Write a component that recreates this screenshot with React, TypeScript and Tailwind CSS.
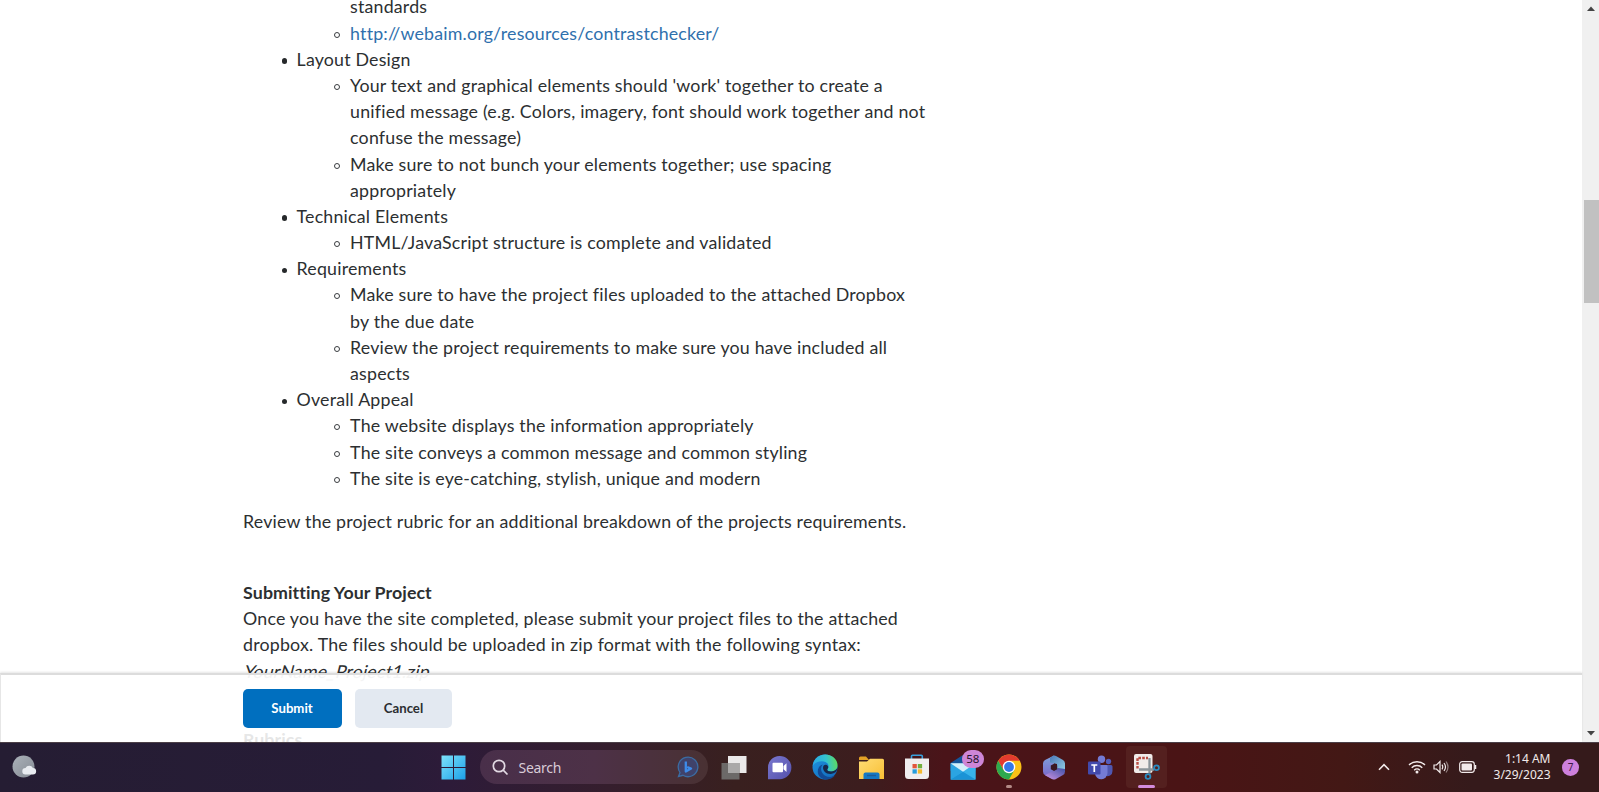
import React from "react";

const sub = "pl-[53.500px]";
const disc =
  "before:mr-[9.500px] before:-ml-[15px] before:inline-block before:h-[5.500px] before:w-[5.500px] before:rounded-full before:bg-[#26292b] before:align-[2px] before:content-['']";
const ring =
  "before:mr-[10px] before:-ml-[16px] before:inline-block before:h-[6px] before:w-[6px] before:rounded-full before:border before:border-[#3a3d40] before:align-[2px] before:content-['']";

function Content() {
  return (
    <main className="h-[742px] w-full overflow-hidden pl-[243.100px] text-[17.8px] leading-[26.180px] tracking-[0.190px] text-[#2c2f31]">
      <div className="-mt-[6.600px] w-[700px] whitespace-nowrap">
        <ul className={sub}>
          <li>
            <ul className={sub}>
              <li>standards</li>
              <li className={ring}>
                <a className="text-[#2f70ad]">http://webaim.org/resources/contrastchecker/</a>
              </li>
            </ul>
          </li>
          <li className={disc}>
            Layout Design
            <ul className={sub}>
              <li className={ring}>
                Your text and graphical elements should 'work' together to create a<br />
                unified message (e.g. Colors, imagery, font should work together and not<br />
                confuse the message)
              </li>
              <li className={ring}>
                Make sure to not bunch your elements together; use spacing<br />
                appropriately
              </li>
            </ul>
          </li>
          <li className={disc}>
            Technical Elements
            <ul className={sub}>
              <li className={ring}>HTML/JavaScript structure is complete and validated</li>
            </ul>
          </li>
          <li className={disc}>
            Requirements
            <ul className={sub}>
              <li className={ring}>
                Make sure to have the project files uploaded to the attached Dropbox<br />
                by the due date
              </li>
              <li className={ring}>
                Review the project requirements to make sure you have included all<br />
                aspects
              </li>
            </ul>
          </li>
          <li className={disc}>
            Overall Appeal
            <ul className={sub}>
              <li className={ring}>The website displays the information appropriately</li>
              <li className={ring}>The site conveys a common message and common styling</li>
              <li className={ring}>The site is eye-catching, stylish, unique and modern</li>
            </ul>
          </li>
        </ul>
        <p className="mt-[17px]">Review the project rubric for an additional breakdown of the projects requirements.</p>
        <p className="mt-[44.8px]">
          <b className="font-bold tracking-[0.080px]">Submitting Your Project</b>
          <br />
          Once you have the site completed, please submit your project files to the attached
          <br />
          dropbox. The files should be uploaded in zip format with the following syntax:
          <br />
          <span className="inline-block origin-[0_75%] -skew-x-14">YourName_Project1.zip</span>
        </p>
        <h2 className="mt-[42.500px] font-bold tracking-[0.080px]">Rubrics</h2>
      </div>
    </main>
  );
}

function Scrollbar() {
  return (
    <div className="flex h-[742px] w-[17px] shrink-0 flex-col items-center bg-[#f0f0f0]">
      <svg className="mt-[6px] h-[5px] w-[8px]" viewBox="0 0 8 5"><path d="M0 5 4 0.5 8 5z" fill="#444" /></svg>
      <div className="mt-[189px] ml-[1px] h-[103px] w-[15px] bg-[#c1c1c1]" />
      <svg className="mt-auto mb-[6px] h-[5px] w-[8px]" viewBox="0 0 8 5"><path d="M0 0 4 4.5 8 0z" fill="#444" /></svg>
    </div>
  );
}

function Weather() {
  return (
    <svg className="h-[24px] w-[26px]" viewBox="0 0 26 24">
      <defs><linearGradient id="moon" x1="0" y1="0" x2="1" y2="1"><stop stopColor="#abb2ba" /><stop offset="1" stopColor="#858b94" /></linearGradient></defs>
      <circle cx="11.5" cy="11.5" r="11" fill="url(#moon)" />
      <path d="M13.500 19.500a3.200 3.200 0 0 1 0-6.400a4.200 4.200 0 0 1 7.400-.2a3.300 3.300 0 0 1-.1 6.600z" fill="#e8ebf0" />
    </svg>
  );
}

function Windows() {
  return (
    <svg className="h-[25px] w-[25px]" viewBox="0 0 25 25">
      <defs><linearGradient id="win" gradientUnits="userSpaceOnUse" x1="0" y1="0" x2="25" y2="25"><stop stopColor="#7fe3fb" /><stop offset="1" stopColor="#1a9fe8" /></linearGradient></defs>
      <path d="M.500.500H12V12H.500zM13 .500h11.500V12H13zM.500 13H12v11.500H.500zM13 13h11.500v11.500H13z" fill="url(#win)" />
    </svg>
  );
}

function Bing() {
  return (
    <svg className="h-[24px] w-[24px]" viewBox="0 0 24 24">
      <path d="M2.500 21.500 4 17.500A9.800 9.800 0 1 1 7 20.300Z" fill="#40426a" stroke="#3b6ca3" strokeWidth="1.300" />
      <path d="M9.800 6.500v10l5.200-2.900-3.800-1.600" fill="none" stroke="#3d8bea" strokeWidth="2.300" strokeLinejoin="round" />
    </svg>
  );
}

function TaskView() {
  return (
    <svg className="h-[25px] w-[26px]" viewBox="0 0 26 25">
      <path d="M7 1h18.500v17H7z" fill="#ebe9e9" />
      <path d="M.500 8h18v16.500H.500z" fill="#6c6968" />
      <path d="M7 8h11.500v10H7z" fill="#aaa8a8" />
    </svg>
  );
}

function Chat() {
  return (
    <svg className="h-[25px] w-[25px]" viewBox="0 0 25 25">
      <defs><linearGradient id="chat" x1="0" y1="0" x2="1" y2="1"><stop stopColor="#7a78d0" /><stop offset="1" stopColor="#5450aa" /></linearGradient></defs>
      <path d="M1 24.300V13A11.700 11.700 0 1 1 12.700 24.300z" fill="url(#chat)" />
      <rect x="5.500" y="7.800" width="10.500" height="9.500" rx="1" fill="#fff" />
      <path d="M16.500 11 19.500 8.300V17l-3-2.700z" fill="#fff" />
    </svg>
  );
}

function Edge() {
  return (
    <svg className="h-[26px] w-[26px]" viewBox="0 0 26 26">
      <defs>
        <linearGradient id="e1" x1="0" y1="0.400" x2="1" y2="0.300"><stop stopColor="#2aa9e5" /><stop offset=".55" stopColor="#34c3cf" /><stop offset="1" stopColor="#5fdc5c" /></linearGradient>
        <linearGradient id="e2" x1="0" y1="0" x2="1" y2="1"><stop stopColor="#1e94e0" /><stop offset="1" stopColor="#1267b8" /></linearGradient>
      </defs>
      <circle cx="13" cy="13" r="12.500" fill="url(#e2)" />
      <path d="M.600 12C1.600 4.800 7 .500 13.200.500c7 0 12.300 5 12.300 10.700 0 3.900-2.800 6.300-6.300 6.300-3 0-4-.9-4-1.700s1.300-1.300 1.300-3.600c0-2.900-2.800-5-6.600-5-4.600 0-7.600 2-9.300 4.800z" fill="url(#e1)" />
      <path d="M9.500 12.500c-1.700 5 2.200 10.300 8.300 10.400 2.400 0 4.500-.8 5.700-1.900-2.300 3-6 4.500-10 4.500C7.800 25 4.900 20 6 15.500c.7-2.700 2.200-4.300 4.700-5z" fill="#124b96" />
      <path d="M11.200 12.500c.4-1.500 2-2.300 3.500-1.500 1.700.9 1.900 2.500 1.100 3.600-1 1.300-.6 2.900 3.200 2.900 2.200 0 4.200-.8 6.500-3.500-.5 3.700-2.800 5.500-6.500 6-5 .3-8.800-3.500-7.800-7.500z" fill="#17284a" />
    </svg>
  );
}

function Folder() {
  return (
    <svg className="h-[25px] w-[27px]" viewBox="0 0 27 25">
      <defs><linearGradient id="fold" x1="0" y1="0" x2="1" y2="1"><stop stopColor="#ffdc74" /><stop offset="1" stopColor="#f8bf35" /></linearGradient></defs>
      <path d="M1 3a1.500 1.500 0 0 1 1.500-1.500H8L11 5H1z" fill="#e2a126" />
      <path d="M1 6.500h8L12 3.800h12.500A1.500 1.500 0 0 1 26 5.300V24H1z" fill="url(#fold)" />
      <path d="M5.500 24v-4.500A2 2 0 0 1 7.500 17.500h12a2 2 0 0 1 2 2V24z" fill="#1478c4" />
      <path d="M9 20.500h9" stroke="#1c5c98" strokeWidth="1.500" />
    </svg>
  );
}

function Store() {
  return (
    <svg className="h-[26px] w-[26px]" viewBox="0 0 26 26">
      <path d="M7.500 6V2.300a1 1 0 0 1 1-1h8.800a1 1 0 0 1 1 1V6" fill="none" stroke="#39a0dc" strokeWidth="1.600" />
      <path d="M1 4.500h24v17a3.500 3.500 0 0 1-3.500 3.500h-17A3.500 3.500 0 0 1 1 21.500z" fill="#f0eeef" />
      <path d="M8.500 10h4.300v4.300H8.500z" fill="#e2553c" /><path d="M13.800 10h4.300v4.300h-4.300z" fill="#72ae3d" />
      <path d="M8.500 15.300h4.300v4.300H8.500z" fill="#269ddd" /><path d="M13.800 15.300h4.300v4.300h-4.300z" fill="#f4b92e" />
    </svg>
  );
}

function Mail() {
  return (
    <div className="relative h-[25px] w-[26px]">
      <svg className="h-[25px] w-[26px]" viewBox="0 0 26 25">
        <path d="M.500 8 13 0l12.500 8v8H.500z" fill="#14559a" />
        <path d="M.500 8.500 H25.500V24.500H.500z" fill="#2ba4e2" />
        <path d="M25.500 8.500v16L.500 24.500z" fill="#38b3ea" />
        <path d="M.500 8.300h25L13 16.800z" fill="#d3effa" />
        <path d="M.500 24.500 13 16.800 25.500 24.500z" fill="#1b93d6" />
      </svg>
      <span className="absolute -top-[5px] left-[12px] flex h-[18px] w-[22px] items-center justify-center rounded-full bg-[#ce86d6] text-[11.500px] text-[#27152d]">58</span>
    </div>
  );
}

function Chrome() {
  return (
    <svg className="h-[26px] w-[26px]" viewBox="0 0 26 26">
      <circle cx="13" cy="13" r="12.500" fill="#fbc116" />
      <path d="M2.200 6.750A12.500 12.500 0 0 1 23.830 6.750H13L7.590 16.130z" fill="#e33b2e" />
      <path d="M2.170 6.750A12.500 12.500 0 0 0 13 25.500L18.410 16.120 7.590 16.130z" fill="#2da94f" />
      <circle cx="13" cy="13" r="6.250" fill="#fff" /><circle cx="13" cy="13" r="4.900" fill="#3478e8" />
    </svg>
  );
}

function M365() {
  return (
    <svg className="h-[25px] w-[24px]" viewBox="0 0 24 25">
      <defs>
        <linearGradient id="m1" x1="0" y1="0" x2="1" y2="1"><stop stopColor="#4a78b8" /><stop offset="1" stopColor="#93d0e4" /></linearGradient>
        <linearGradient id="m2" x1="0" y1="0" x2="0" y2="1"><stop stopColor="#7ea3dc" /><stop offset="1" stopColor="#7a62c8" /></linearGradient>
        <linearGradient id="m3" x1="0" y1="1" x2="1" y2="0"><stop stopColor="#cf95e4" /><stop offset="1" stopColor="#3c4fa4" /></linearGradient>
      </defs>
      <path d="M12 .400 3 5Q1 6.200 1 8.500v8Q1 19 3 20l7 4 2-8V4.800z" fill="url(#m2)" />
      <path d="M11 .700Q12.500 0 14 .900L21 5q2 1.200 2 3.500v8L15 14.500V9L8 7.500V3z" fill="url(#m1)" />
      <path d="M23 14v2.500q0 2.300-2 3.500l-7 4q-2 1-4 0L3 20.300 16 13z" fill="url(#m3)" />
      <path d="M12 8.800 15.200 10.600v3.600L12 16 8.800 14.200v-3.600z" fill="#391923" />
    </svg>
  );
}

function Teams() {
  return (
    <svg className="h-[25px] w-[26px]" viewBox="0 0 26 25">
      <circle cx="21.500" cy="6.500" r="2.700" fill="#555cba" /><circle cx="14.500" cy="4.300" r="3.700" fill="#747bd5" />
      <path d="M17 10h7a1.500 1.500 0 0 1 1.500 1.500V16a5 5 0 0 1-7.500 4.500z" fill="#5057b0" />
      <path d="M8 10h11.500a1 1 0 0 1 1 1v7A6.300 6.300 0 0 1 8 19z" fill="#747bd5" />
      <rect x="1" y="6.500" width="12.500" height="13" rx="1" fill="#424aac" />
      <path d="M4.300 10h6M7.300 10v7" stroke="#fff" strokeWidth="1.700" />
    </svg>
  );
}

function Snip() {
  return (
    <svg className="h-[27px] w-[27px]" viewBox="0 0 27 27">
      <rect x="1" y="1" width="18.500" height="19" rx="2" fill="#f1ecea" />
      <path d="M4.500 15.500V5h10.500" fill="none" stroke="#b94f45" strokeWidth="2.400" strokeDasharray="2.600 1.200" />
      <path d="M16.500 5v15.500M6 16.500h15" stroke="#8c959b" strokeWidth="2.300" />
      <circle cx="23.500" cy="14.800" r="2.400" fill="none" stroke="#2b8bc0" strokeWidth="1.800" />
      <circle cx="15" cy="23.500" r="2.400" fill="none" stroke="#2b8bc0" strokeWidth="1.800" />
    </svg>
  );
}

function Tray() {
  return (
    <div className="flex h-full items-center text-[#f2eaea]">
      <svg className="mr-[18.500px] h-[8px] w-[12px]" viewBox="0 0 12 8" fill="none" stroke="currentColor" strokeWidth="1.600"><path d="m1 6.700 5-5 5 5" /></svg>
      <svg className="mr-[7px] h-[14px] w-[18px]" viewBox="0 0 18 14" fill="none" stroke="currentColor" strokeWidth="1.400">
        <path d="M1 5a11.300 11.300 0 0 1 16 0M3.700 7.700a7.500 7.500 0 0 1 10.600 0M6.200 10.200a4 4 0 0 1 5.600 0" /><circle cx="9" cy="12" r="1.500" fill="currentColor" stroke="none" />
      </svg>
      <svg className="mr-[10px] h-[14px] w-[16px]" viewBox="0 0 16 14" fill="none" stroke="currentColor" strokeWidth="1.200">
        <path d="M1 5h2.500L7 1.500v11L3.500 9H1zM9 4.700q1.500 2.300 0 4.600M11 3q3 4 0 8" /><path d="M13 1.500q4 5.500 0 11" opacity=".5" />
      </svg>
      <svg className="mr-[15px] h-[12px] w-[18px]" viewBox="0 0 18 12"><rect x=".7" y=".7" width="14.600" height="10.600" rx="2.500" fill="none" stroke="currentColor" strokeWidth="1.200" /><rect x="2.500" y="2.500" width="10.500" height="7" rx="1" fill="currentColor" /><path d="M16.500 4v4" stroke="currentColor" strokeWidth="1.500" /></svg>
      <div className="w-[58.500px] text-right text-[12px] leading-[16.500px] whitespace-nowrap">
        <div>1:14 AM</div>
        <div>3/29/2023</div>
      </div>
      <span className="mr-[20px] ml-[11.500px] flex h-[17px] w-[17px] items-center justify-center rounded-full bg-[#cd80dc] text-[10px] text-[#3b1744]">7</span>
    </div>
  );
}

function Taskbar() {
  const icon = "flex h-[48px] w-[45.8px] shrink-0 items-center justify-center";
  return (
    <footer className="grid h-[50px] w-full grid-cols-[430px_750px_1fr] grid-rows-[48px] border-t border-[#4c4048] bg-[linear-gradient(90deg,#251d33_0%,#271c37_24%,#2d1b39_28%,#351e2d_38%,#39201f_46%,#3c1d1e_54%,#4a1419_59%,#4a1415_74%,#431815_84%,#351a1b_92%,#351a1b_100%)] font-['Noto_Sans',sans-serif]">
      <div className="flex items-center pl-[12px]"><Weather /></div>
      <div className="flex items-center">
        <div className="flex w-[50px] justify-center pr-[3px]"><Windows /></div>
        <div className="flex h-[34px] w-[228px] shrink-0 items-center rounded-full bg-[linear-gradient(90deg,#492f4a,#4d3147_50%,#493133)] pr-[8px] pl-[12px]">
          <svg className="h-[17px] w-[17px]" viewBox="0 0 17 17" fill="none" stroke="#e2d9e3" strokeWidth="1.700"><circle cx="7" cy="7" r="5.700" /><path d="m11.200 11.200 4.300 4.300" /></svg>
          <span className="ml-[9.500px] grow text-[14px] tracking-[-0.300px] text-[#d8cbd7]">Search</span>
          <Bing />
        </div>
        <div className="ml-[3px] flex">
          <div className={icon}><TaskView /></div>
          <div className={icon}><Chat /></div>
          <div className={icon}><Edge /></div>
          <div className={icon}><Folder /></div>
          <div className={icon}><Store /></div>
          <div className={icon}><Mail /></div>
          <div className={icon + " relative"}><Chrome /><span className="absolute bottom-[3px] h-[3px] w-[6px] rounded-full bg-[#b38a86]" /></div>
          <div className={icon}><M365 /></div>
          <div className={icon}><Teams /></div>
          <div className={icon}>
            <div className="relative flex h-[42px] w-[41px] items-center justify-center rounded-[4px] bg-[#54201f] pb-[1px]">
              <Snip />
              <span className="absolute bottom-0 h-[3px] w-[17px] rounded-full bg-[#d38bdc]" />
            </div>
          </div>
        </div>
      </div>
      <div className="flex justify-end"><Tray /></div>
    </footer>
  );
}

export default function App() {
  return (
    <div className="relative h-[792px] w-[1599px] overflow-hidden bg-white font-[Lato,sans-serif]">
      <div className="flex h-[742px]">
        <Content />
        <Scrollbar />
      </div>
      <div className="absolute top-[673px] left-0 flex h-[69px] w-[1582px] items-start gap-[13px] border-t-2 border-l border-t-[#dcdcdc] border-l-[#e6e6e6] bg-[linear-gradient(180deg,rgba(255,255,255,0.95)_0%,rgba(255,255,255,0.95)_40%,rgba(255,255,255,0.87)_100%)] pt-[14px] pl-[242px] text-[13.200px] font-bold shadow-[0_-1px_2px_rgba(0,0,0,0.1)]">
        <div className="flex h-[39px] w-[99px] items-center justify-center rounded-[5px] bg-[#006fbf] pr-[1px] text-white">Submit</div>
        <div className="flex h-[39px] w-[97px] items-center justify-center rounded-[5px] bg-[#e3e9f1] text-[#2b2e31]">Cancel</div>
      </div>
      <Taskbar />
    </div>
  );
}
